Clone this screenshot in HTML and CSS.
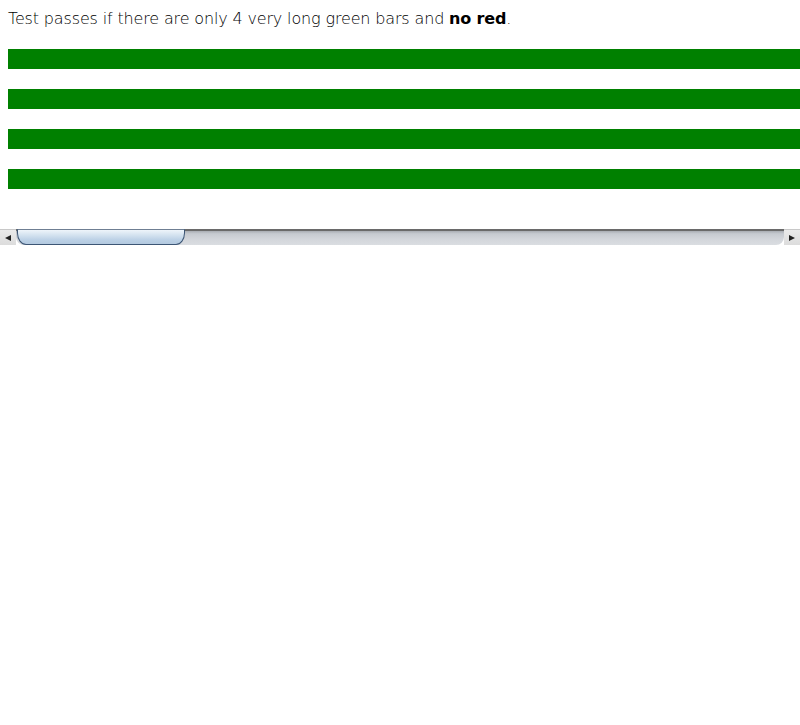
FILE: index.html
```html
<!DOCTYPE html>
<html>
<head>
<meta charset="utf-8">
<link rel="stylesheet" href="styles.css">
</head>
<body>
<div class="page">
  <p class="note">Test passes if there are only 4 very long green bars and <strong>no red</strong>.</p>
  <div class="bars">
    <div class="bar"></div>
    <div class="bar"></div>
    <div class="bar"></div>
    <div class="bar"></div>
  </div>
</div>
<div class="hscroll">
  <div class="btn left"><span class="tri-left"></span></div>
  <div class="track">
    <div class="thumb"></div>
  </div>
  <div class="btn right"><span class="tri-right"></span></div>
</div>
</body>
</html>
```

FILE: styles.css
```css
html, body {
  margin: 0;
  padding: 0;
  background: #fff;
  overflow: hidden;
}
.page {
  padding: 8px 0 0 8px;
  font-family: "DejaVu Sans", sans-serif;
  font-size: 16px;
  color: #000;
}
.note {
  margin: 0;
  line-height: 21px;
  font-weight: 300;
  letter-spacing: -0.15px;
  color: #000;
}
.note strong {
  font-weight: bold;
}
.bars {
  margin-top: 20px;
  display: flex;
  flex-direction: column;
  gap: 20px;
  padding-bottom: 40px;
}
.bar {
  height: 20px;
  width: 792px;
  background: #008000;
}
.hscroll {
  display: flex;
  height: 16px;
  width: 800px;
}
.btn {
  width: 16px;
  height: 16px;
  flex: none;
  display: flex;
  align-items: center;
  justify-content: center;
  background: linear-gradient(#eaeaea, #dcdcdc);
  border-top: 1px solid #c8c8c8;
  box-sizing: border-box;
}
.tri-left {
  width: 0; height: 0;
  border-top: 3.5px solid transparent;
  border-bottom: 3.5px solid transparent;
  border-right: 6px solid #222;
}
.tri-right {
  width: 0; height: 0;
  border-top: 3.5px solid transparent;
  border-bottom: 3.5px solid transparent;
  border-left: 6px solid #222;
}
.track {
  flex: 1;
  height: 16px;
  box-sizing: border-box;
  border-top: 2px solid #6a6a6a;
  background: linear-gradient(#a9adb3 0%, #c6cad0 20%, #d3d6db 60%, #dadde1 100%);
  border-radius: 0 0 8px 8px;
  display: flex;
  padding-left: 1px;
}
.thumb {
  width: 168px;
  height: 16px;
  margin-top: -2px;
  box-sizing: border-box;
  border: 1px solid #3d5675;
  border-top: 1px solid #6f7f93;
  border-radius: 0 0 9px 9px / 0 0 12px 12px;
  background: linear-gradient(#eef4fa 0%, #d5e3f0 35%, #bcd1e6 70%, #b3c9df 100%);
}
```
